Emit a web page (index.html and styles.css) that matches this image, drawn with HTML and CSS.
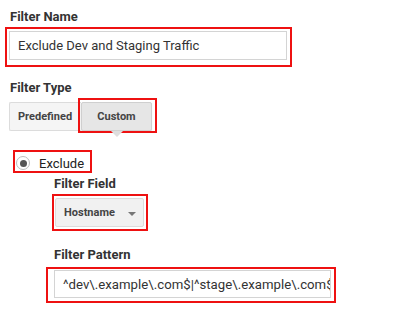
FILE: index.html
```html
<!DOCTYPE html>
<html>
<head>
<meta charset="utf-8">
<link rel="stylesheet" href="styles.css">
</head>
<body>
<div class="page">
  <div class="label label-name">Filter Name</div>
  <div class="mark mark-name">
    <div class="input input-name">Exclude Dev and Staging Traffic</div>
  </div>

  <div class="label label-type">Filter Type</div>
  <div class="btn-row">
    <div class="btn btn-pre">Predefined</div>
    <div class="btn btn-custom">Custom</div>
  </div>

  <div class="mark mark-radio">
    <span class="radio"><span class="radio-dot"></span></span>
    <span class="radio-text">Exclude</span>
  </div>

  <div class="indent">
    <div class="label label-field">Filter Field</div>
    <div class="mark mark-field">
      <div class="btn btn-select">Hostname<span class="caret"></span></div>
    </div>

    <div class="label label-pattern">Filter Pattern</div>
  </div>
  <div class="mark mark-pattern">
    <div class="input input-pattern"><span class="pattern-text">^dev\.example\.com$|^stage\.example\.com$</span></div>
  </div>
</div>
</body>
</html>
```

FILE: styles.css
```css
html, body {
  margin: 0;
  padding: 0;
  background: #ffffff;
}
body {
  font-family: Roboto, "Liberation Sans", Arial, sans-serif;
  color: #333333;
  overflow: hidden;
}
.page {
  padding-top: 9px;
  width: 395px;
  height: 316px;
  box-sizing: border-box;
}
.label {
  font-size: 13px;
  font-weight: 700;
  line-height: 16px;
  height: 16px;
  color: #333333;
  padding-left: 10px;
}
.mark {
  border: 2px solid #ee1111;
  box-sizing: border-box;
}
.mark-name {
  margin: 2px 0 0 5px;
  width: 287px;
  height: 40px;
  padding: 2px 3px 0 2px;
}
.input {
  box-sizing: border-box;
  border: 1px solid #d4d4d4;
  background: #fff;
  font-size: 13px;
  color: #333;
  white-space: nowrap;
  overflow: hidden;
  display: flex;
  align-items: center;
}
.input-name {
  width: 278px;
  height: 29px;
  padding-left: 8px;
}
.label-type {
  margin-top: 13px;
}
.btn-row {
  display: flex;
  margin: 6px 0 0 9px;
}
.btn {
  box-sizing: border-box;
  height: 29px;
  font-size: 11px;
  font-weight: 700;
  color: #444;
  display: flex;
  align-items: center;
  border: 1px solid #dcdcdc;
  border-radius: 2px;
}
.btn-pre {
  width: 72px;
  padding-left: 8px;
  background: #f5f5f5;
  border-right: none;
  border-radius: 2px 0 0 2px;
}
.btn-custom {
  position: relative;
  width: 71px;
  justify-content: center;
  background: #e6e6e6;
  border-color: #cfcfcf;
  box-shadow: 0 1px 1px rgba(0,0,0,0.12);
}
.btn-custom::before {
  content: "";
  position: absolute;
  top: -5px;
  left: -4px;
  right: -6px;
  bottom: -3px;
  border: 2px solid #ee1111;
}
.btn-custom::after {
  content: "";
  position: absolute;
  left: 50%;
  margin-left: -6px;
  top: 28px;
  border-left: 6px solid transparent;
  border-right: 6px solid transparent;
  border-top: 6px solid #dedede;
}
.mark-radio {
  margin: 19px 0 0 13px;
  width: 79px;
  height: 23px;
  display: flex;
  align-items: center;
  padding: 3px 0 0 1px;
}
.radio {
  box-sizing: border-box;
  width: 14px;
  height: 14px;
  border: 1px solid #bdbdbd;
  border-radius: 50%;
  display: flex;
  align-items: center;
  justify-content: center;
  background: #fff;
}
.radio-dot {
  width: 7px;
  height: 7px;
  border-radius: 50%;
  background: #555;
}
.radio-text {
  margin-left: 9px;
  font-size: 13px;
  color: #222;
}
.indent {
  padding-left: 44px;
}
.label-field {
  margin-top: 3px;
}
.mark-field {
  margin: 2px 0 0 8px;
  width: 96px;
  height: 37px;
  padding: 2px 0 0 1px;
}
.btn-select {
  width: 89px;
  padding-left: 8px;
  background: #f1f1f1;
  position: relative;
}
.caret {
  position: absolute;
  left: 72px;
  top: 13px;
  border-left: 4px solid transparent;
  border-right: 4px solid transparent;
  border-top: 4px solid #777;
}
.label-pattern {
  margin-top: 16px;
}
.mark-pattern {
  margin: 4px 0 0 46px;
  width: 290px;
  height: 36px;
  padding: 1px 0 0 6px;
}
.input-pattern {
  width: 277px;
  height: 28px;
  padding: 0 1px 0 8px;
}
.pattern-text {
  font-size: 13.2px;
  letter-spacing: 0.02px;
}
```
